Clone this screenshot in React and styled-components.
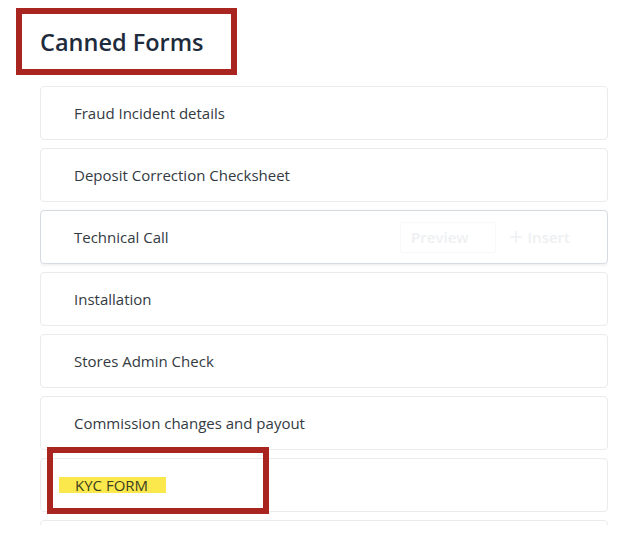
import styled, { createGlobalStyle } from 'styled-components';

const GlobalStyle = createGlobalStyle`
    body {
        margin: 0;
        background: #fff;
        font-family: "Open Sans", "Liberation Sans", sans-serif;
    }
`;

const Page = styled.div`
    width: 622px;
    height: 540px;
    padding-top: 8px;
    box-sizing: border-box;
    overflow: hidden;
`;

const TitleBox = styled.div`
    display: flex;
    align-items: center;
    width: 221px;
    height: 67px;
    margin-left: 16px;
    padding-left: 18px;
    border: 6px solid #a8261f;
    box-sizing: border-box;

    > h2 {
        margin: 0;
        color: #1e2b3c;
        font-size: 23.5px;
        font-weight: 600;
    }
`;

const List = styled.ul`
    display: flex;
    flex-direction: column;
    gap: 8px;
    width: 568px;
    height: 439px;
    margin: 11px 0 0 40px;
    padding: 0;
    list-style: none;
    overflow: hidden;
`;

const Card = styled.li`
    position: relative;
    display: flex;
    align-items: center;
    flex-shrink: 0;
    height: 54px;
    padding: 0 24px 0 33px;
    border: 1px solid ${p => (p.$hover ? '#d6dbe1' : '#ebebeb')};
    border-radius: 4px;
    box-shadow: ${p => (p.$hover ? '0 1px 3px rgba(40, 60, 90, 0.1)' : 'none')};
    box-sizing: border-box;
    color: #333a42;
    font-size: 15px;
`;

const Name = styled.span`
    flex: 1;
`;

const Highlight = styled.span`
    margin-left: -15px;
    padding: 0 18px 0 16px;
    background: #fbe84c;
    color: #3a3d22;
    line-height: 16px;
`;

const Actions = styled.div`
    display: flex;
    align-items: center;
`;

const GhostButton = styled.button`
    display: flex;
    align-items: center;
    gap: 5px;
    height: 31px;
    padding: 0 ${p => (p.$outlined ? '26px' : '12px')} 0 ${p => (p.$outlined ? '10px' : '12px')};
    border: 1px solid ${p => (p.$outlined ? '#f7f8f9' : 'transparent')};
    border-radius: 3px;
    background: transparent;
    color: #eef0f2;
    font-family: inherit;
    font-size: 15px;
    font-weight: 600;
`;

// 리뷰용 주석 박스 (스크린샷 위에 그려진 빨간 테두리)
const Annotation = styled.div`
    position: absolute;
    left: 6px;
    top: -12px;
    width: 222px;
    height: 67px;
    border: 6px solid #a8261f;
    box-sizing: border-box;
    pointer-events: none;
`;

const forms = [
    'Fraud Incident details',
    'Deposit Correction Checksheet',
    'Technical Call',
    'Installation',
    'Stores Admin Check',
    'Commission changes and payout',
];

const App = () => {
    return (
        <Page>
            <GlobalStyle />
            <TitleBox>
                <h2>Canned Forms</h2>
            </TitleBox>
            <List>
                {forms.map(name => (
                    <Card key={name} $hover={name === 'Technical Call'}>
                        <Name>{name}</Name>
                        {name === 'Technical Call' && (
                            <Actions>
                                <GhostButton $outlined>Preview</GhostButton>
                                <GhostButton>
                                    <svg width="14" height="14" viewBox="0 0 14 14">
                                        <path d="M7 1v12M1 7h12" stroke="currentColor" strokeWidth="1.6" />
                                    </svg>
                                    Insert
                                </GhostButton>
                            </Actions>
                        )}
                    </Card>
                ))}
                <Card>
                    <Highlight>KYC FORM</Highlight>
                    <Annotation />
                </Card>
                <Card />
            </List>
        </Page>
    );
};

export default App;
